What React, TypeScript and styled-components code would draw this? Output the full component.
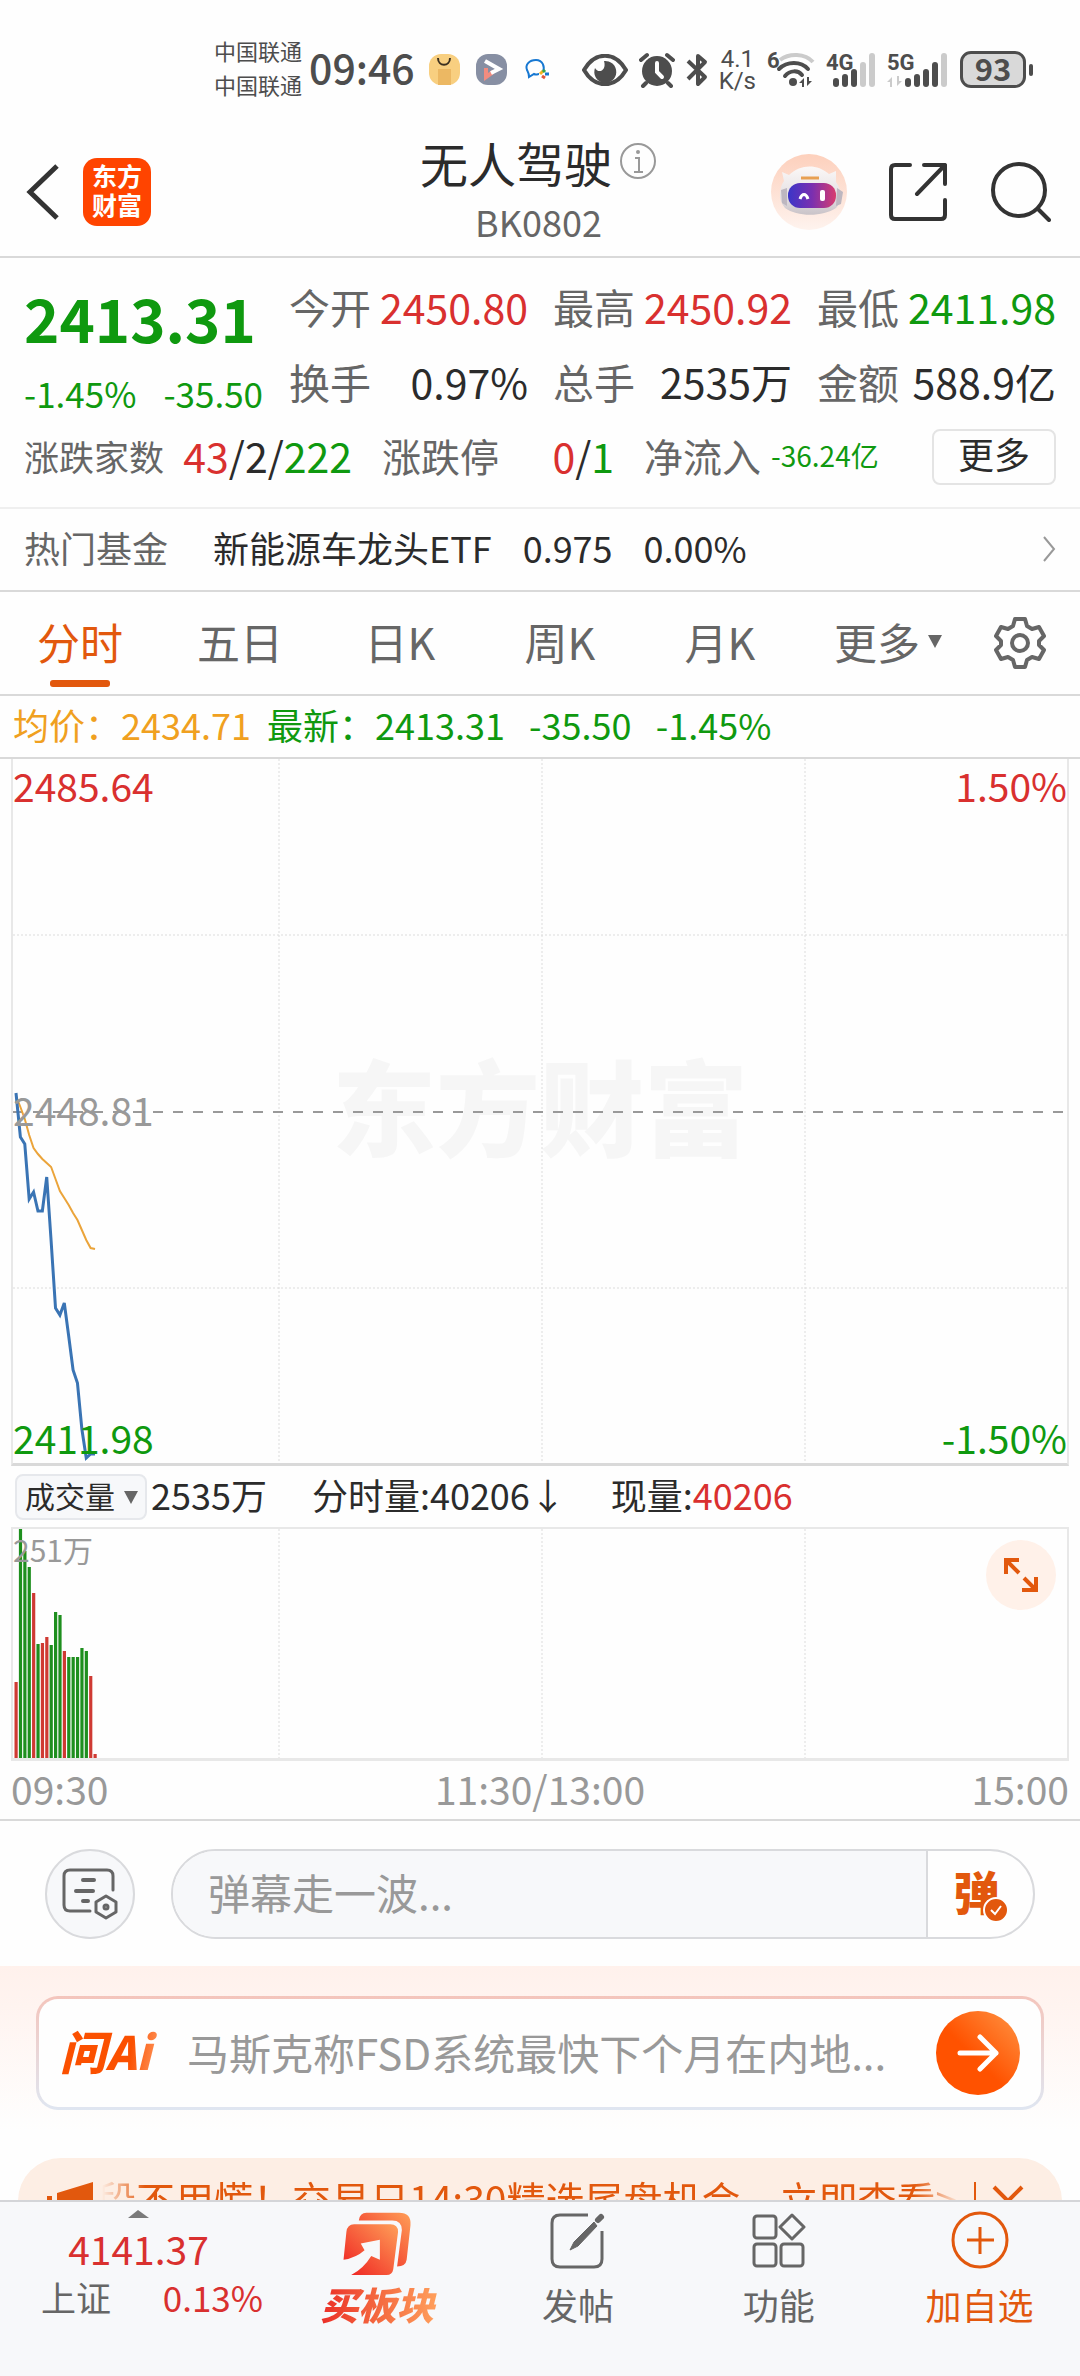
import React from "react";
import styled, { createGlobalStyle, css } from "styled-components";

const color = {
  red: "#d9302f",
  green: "#0f990f",
  orange: "#e2580d",
  amber: "#f0a020",
  ink: "#2b2b2b",
  mid: "#666666",
  soft: "#999999",
  line: "#d9d9d9",
  faint: "#e8e8e8",
  panel: "#f7f8fa",
  status: "#4d4d4d",
};

const GlobalStyle = createGlobalStyle`
  * { box-sizing: border-box; }
  body {
    margin: 0;
    background: #fefefe;
    color: ${color.ink};
    font-family: "Noto Sans CJK SC", "Noto Sans", sans-serif;
  }
  button, input, select {
    font: inherit;
    color: inherit;
    border: 0;
    padding: 0;
    margin: 0;
    background: none;
  }
  a { color: inherit; text-decoration: none; }
  svg { display: block; flex: none; }
`;

type Tone = "red" | "green" | "ink" | "mid" | "soft" | "amber" | "orange";

const Screen = styled.div`
  height: 100vh;
  display: flex;
  flex-direction: column;
`;

const Scroller = styled.main`
  flex: 1;
  min-height: 0;
  overflow-y: auto;
  scrollbar-width: none;
`;

const Text = styled.span<{ $size?: number; $tone?: Tone; $weight?: number }>`
  font-size: ${(p) => p.$size ?? 36}px;
  line-height: 1;
  white-space: pre;
  font-weight: ${(p) => p.$weight ?? 400};
  color: ${(p) => color[p.$tone ?? "ink"]};
`;

const IconButton = styled.button`
  display: flex;
  align-items: center;
  justify-content: center;
  cursor: pointer;
`;

/* Status bar */

const StatusBar = styled.div`
  height: 128px;
  padding: 11px 47px 0 214px;
  display: flex;
  align-items: center;
  gap: 14px;
  color: ${color.status};
  flex: none;
`;

const StatusGroup = styled.div<{ $gap: number; $end?: boolean }>`
  display: flex;
  align-items: center;
  gap: ${(p) => p.$gap}px;
  margin-left: ${(p) => (p.$end ? "auto" : 0)};
`;

const NetworkTime = styled.div`
  display: flex;
  align-items: center;
  gap: 7px;
  padding-bottom: 6px;
`;

const Carriers = styled.div`
  font-size: 22px;
  line-height: 34px;
`;

const Clock = styled.time`
  font-size: 41px;
  line-height: 1;
  font-weight: 500;
`;

const Speed = styled.div`
  font-family: Roboto, sans-serif;
  font-size: 24px;
  line-height: 22px;
  text-align: center;
`;

const SignalText = styled.text`
  font-family: Roboto, sans-serif;
  font-weight: 700;
  font-size: 22px;
  fill: ${color.status};
`;

const Battery = styled.div`
  display: flex;
  align-items: center;
  gap: 3px;

  &::after {
    content: "";
    width: 4px;
    height: 12px;
    border-radius: 2px;
    background: ${color.status};
  }
`;

const BatteryBody = styled.span`
  width: 66px;
  height: 37px;
  padding-bottom: 4px;
  border: 3px solid ${color.status};
  border-radius: 11px;
  background: #d9d9d9;
  display: flex;
  align-items: center;
  justify-content: center;
  font-size: 31px;
  line-height: 1;
  font-weight: 700;
`;

/* Header */

const Header = styled.header`
  height: 130px;
  flex: none;
  padding: 0 29px 0 26px;
  display: grid;
  grid-template-columns: 1fr auto 1fr;
  align-items: center;
  border-bottom: 2px solid ${color.line};
`;

const HeaderSide = styled.div<{ $end?: boolean }>`
  display: flex;
  align-items: center;
  gap: ${(p) => (p.$end ? 42 : 23)}px;
  justify-content: ${(p) => (p.$end ? "flex-end" : "flex-start")};
`;

const Brand = styled.a`
  width: 68px;
  height: 68px;
  padding-bottom: 4px;
  border-radius: 14px;
  background: #ff4400;
  color: #fff;
  display: flex;
  align-items: center;
  justify-content: center;
  text-align: center;
  font-size: 25px;
  line-height: 29px;
  font-weight: 700;
`;

const TitleBlock = styled.div`
  display: flex;
  flex-direction: column;
  align-items: center;
  gap: 17px;
  padding-bottom: 8px;
`;

const TitleLine = styled.h1`
  margin: 0;
  display: flex;
  align-items: center;
  gap: 8px;
  font-size: 48px;
  line-height: 1;
  font-weight: 400;
`;

/* Quote */

const Quote = styled.section`
  padding: 11px 24px 22px;
  border-bottom: 2px solid #efefef;
`;

const QuoteTop = styled.div`
  display: grid;
  grid-template-columns: 239px 1fr;
  column-gap: 26px;
`;

const PriceBlock = styled.div`
  display: flex;
  flex-direction: column;
  gap: 28px;
  padding-top: 18px;
`;

const PriceLine = styled.div`
  display: flex;
  justify-content: space-between;
`;

const Stats = styled.dl`
  margin: 0;
  display: grid;
  grid-template-columns: repeat(3, 1fr);
  column-gap: 25px;
`;

const Stat = styled.div`
  height: 75px;
  display: flex;
  align-items: center;
  justify-content: space-between;
  dd { margin: 0; display: flex; }
  dt, dd { line-height: 1; }
`;

const Breadth = styled.dl`
  margin: 0;
  display: grid;
  grid-template-columns: 328px 232px 1fr auto;
  column-gap: 30px;
  align-items: center;
  padding-top: 10px;
`;

const BreadthItem = styled.div<{ $wide?: boolean; $gap?: number }>`
  display: flex;
  align-items: center;
  gap: ${(p) => p.$gap ?? 0}px;
  padding-bottom: 4px;
  justify-content: ${(p) => (p.$wide ? "space-between" : "flex-start")};
  dd { margin: 0; display: flex; }
  dt, dd { line-height: 1; }
`;

const MoreButton = styled.button`
  width: 124px;
  height: 56px;
  padding-bottom: 8px;
  border: 2px solid #e4e4e4;
  border-radius: 8px;
  font-size: 36px;
  line-height: 1;
`;

const FundRow = styled.a`
  height: 83px;
  padding: 0 24px 6px;
  display: flex;
  align-items: center;
  border-bottom: 2px solid ${color.line};
  gap: 31px;
`;

const FundName = styled.span`
  margin-left: 14px;
  font-size: 36px;
  line-height: 1;
`;

const Push = styled.span`
  margin-left: auto;
  padding-top: 4px;
`;

/* Period tabs */

const Tabs = styled.nav`
  height: 104px;
  display: grid;
  grid-template-columns: repeat(6, 8fr) 6fr;
  border-bottom: 2px solid ${color.line};
`;

const Tab = styled.button<{ $active?: boolean; $menu?: boolean }>`
  display: flex;
  align-items: center;
  justify-content: center;
  gap: 8px;
  position: relative;
  font-size: 43px;
  line-height: 1;
  padding: 0 0 4px ${(p) => (p.$menu ? 16 : 0)}px;
  color: ${(p) => (p.$active ? color.orange : color.mid)};

  ${(p) =>
    p.$active &&
    css`
      &::after {
        content: "";
        position: absolute;
        left: 50%;
        bottom: 7px;
        width: 60px;
        height: 7px;
        margin-left: -30px;
        border-radius: 3px;
        background: ${color.orange};
      }
    `}
`;

const AverageLine = styled.div`
  height: 63px;
  padding: 0 13px 6px;
  display: flex;
  align-items: center;
  border-bottom: 2px solid ${color.line};
`;

/* Charts */

const Plot = styled.div<{ $height: number; $bottom: string }>`
  position: relative;
  height: ${(p) => p.$height}px;
  margin: 0 11px;
  border: 2px solid ${color.faint};
  border-top-width: 0;
  border-bottom: 3px solid ${(p) => p.$bottom};
`;

const PlotSvg = styled.svg`
  position: absolute;
  inset: 0;
  width: 100%;
  height: 100%;
`;

const PlotLabel = styled.span<{ $v: "top" | "middle" | "bottom"; $right?: boolean; $tone: Tone; $small?: boolean }>`
  position: absolute;
  ${(p) => (p.$right ? "right: 0;" : "left: 0;")}
  ${(p) => p.$v === "top" && `top: ${p.$small ? 0 : 6}px;`}
  ${(p) => p.$v === "middle" && "top: 50%; margin-top: -22px;"}
  ${(p) => p.$v === "bottom" && "bottom: 6px;"}
  font-size: ${(p) => (p.$small ? 30 : 39)}px;
  line-height: 40px;
  color: ${(p) => color[p.$tone]};
`;

const Watermark = styled.span`
  position: absolute;
  inset: 0;
  padding-bottom: 14px;
  display: flex;
  align-items: center;
  justify-content: center;
  font-size: 104px;
  line-height: 1;
  font-weight: 900;
  color: #f6f6f6;
`;

const VolumeBar = styled.div`
  height: 63px;
  margin: 0 11px;
  display: flex;
  align-items: center;
  padding-left: 4px;
  border-bottom: 2px solid ${color.faint};
`;

const SelectWrap = styled.label`
  position: relative;
  display: flex;
  margin-right: 4px;

  select {
    appearance: none;
    width: 132px;
    height: 46px;
    padding: 0 0 4px 8px;
    border: 2px solid #e6e8ec;
    border-radius: 8px;
    background: ${color.panel};
    font-size: 30px;
    line-height: 38px;
  }

  svg {
    position: absolute;
    right: 9px;
    top: 17px;
    pointer-events: none;
  }
`;

const VolumeItem = styled.span`
  display: flex;
  align-items: center;
  margin-right: 45px;
  padding-bottom: 5px;
`;

const ExpandButton = styled(IconButton)`
  position: absolute;
  right: 11px;
  top: 11px;
  width: 70px;
  height: 70px;
  border-radius: 50%;
  background: #fff1e9;
`;

const TimeAxis = styled.div`
  height: 60px;
  padding: 0 11px 4px;
  display: grid;
  grid-template-columns: 1fr auto 1fr;
  align-items: center;
  font-size: 39px;
  line-height: 1;
  color: ${color.soft};
  border-bottom: 2px solid ${color.line};

  span:last-child { text-align: right; }
`;

/* Comment bar */

const CommentBar = styled.form`
  padding: 28px 45px 27px;
  display: flex;
  gap: 36px;
`;

const RoundButton = styled(IconButton)`
  width: 90px;
  height: 90px;
  flex: none;
  border: 2px solid #d9dadd;
  border-radius: 50%;
  background: ${color.panel};
`;

const CommentField = styled.div`
  flex: 1;
  height: 90px;
  display: flex;
  overflow: hidden;
  border: 2px solid #d9dadd;
  border-radius: 45px;

  input {
    flex: 1;
    min-width: 0;
    padding: 0 35px 6px;
    background: ${color.panel};
    font-size: 42px;
    border-right: 2px solid #d9dadd;
  }
  input::placeholder { color: ${color.soft}; opacity: 1; }
`;

const BulletButton = styled(IconButton)`
  position: relative;
  width: 105px;
  padding: 0 8px 8px 0;
  font-size: 46px;
  line-height: 1;
  font-weight: 900;
  color: ${color.orange};

  svg {
    position: absolute;
    right: 24px;
    bottom: 14px;
  }
`;

/* AI prompt */

const AiSection = styled.section`
  padding: 30px 36px 48px;
  background: linear-gradient(180deg, #fff1ec 0, #fff4f0 40px, #fefefe 165px);
`;

const AiCard = styled.div`
  height: 114px;
  padding: 0 21px;
  display: flex;
  align-items: center;
  border: 3px solid transparent;
  border-radius: 22px;
  background: linear-gradient(#fefefe, #fefefe) padding-box,
    linear-gradient(180deg, #f4c5bc, #dfe6f1) border-box;
`;

const AiLogo = styled.span`
  width: 127px;
  padding-bottom: 6px;
  font-size: 46px;
  line-height: 54px;
  font-weight: 900;
  font-style: italic;
  color: transparent;
  background: linear-gradient(100deg, #fb5000 55%, #ff9a62 78%);
  background-clip: text;
`;

const AiQuestion = styled.a`
  flex: 1;
  min-width: 0;
  padding-bottom: 3px;
  font-size: 42px;
  line-height: 60px;
  color: ${color.soft};
  white-space: nowrap;
`;

const AiSend = styled(IconButton)`
  width: 84px;
  height: 84px;
  border-radius: 50%;
  background: linear-gradient(45deg, #ff5200 45%, #ff9545);
`;

/* Promo strip */

const Promo = styled.aside`
  margin: 0 18px;
  height: 86px;
  padding: 0 38px 0 29px;
  display: flex;
  align-items: center;
  border-radius: 43px;
  background: #fdeee4;
  color: ${color.orange};
`;

const PromoText = styled.a`
  flex: 1;
  min-width: 0;
  margin-left: 4px;
  padding-bottom: 6px;
  overflow: hidden;
  white-space: nowrap;
  font-size: 39px;
  line-height: 58px;
  mask-image: linear-gradient(90deg, transparent 5px, #000 48px, #000 calc(100% - 60px), transparent calc(100% - 12px));
`;

const PromoDivider = styled.i`
  width: 2px;
  height: 38px;
  margin-right: 16px;
  background: ${color.orange};
`;

/* Bottom bar */

const BottomBar = styled.footer`
  flex: none;
  height: 176px;
  display: flex;
  border-top: 2px solid #d4d5d8;
  background: ${color.panel};
`;

const IndexTicker = styled.button`
  width: 277px;
  padding-top: 8px;
  display: flex;
  flex-direction: column;
  align-items: center;

  svg { margin-bottom: 6px; }
`;

const IndexLine = styled.span<{ $split?: boolean }>`
  display: flex;
  align-items: center;
  height: 48px;
  width: ${(p) => (p.$split ? "100%" : "auto")};
  padding: ${(p) => (p.$split ? "0 14px 0 41px" : 0)};
  justify-content: space-between;
`;

const Action = styled.button<{ $tone?: Tone }>`
  flex: 1;
  padding-top: 8px;
  display: flex;
  flex-direction: column;
  align-items: center;
  justify-content: flex-start;
  gap: 4px;
  font-size: 36px;
  line-height: 48px;
  color: ${(p) => color[p.$tone ?? "mid"]};

  svg { height: 66px; }
`;

const BuyLabel = styled.span`
  padding: 0 4px;
  font-size: 38px;
  font-weight: 900;
  font-style: italic;
  color: transparent;
  background: linear-gradient(90deg, #ea2a26, #f4683f 50%, #ffa05c);
  background-clip: text;
`;

const Caret = () => (
  <svg width="14" height="13" viewBox="0 0 14 13" aria-hidden>
    <path d="M0 0H14L7 13Z" fill={color.mid} />
  </svg>
);

const BAR_HEIGHTS = [9, 13, 18, 25, 34];

const SignalBars = ({ label, on, data }: { label: string; on: number; data?: boolean }) => {
  const start = data ? 18 : 7;
  const width = data ? 62 : 50;
  return (
    <svg width={width} height="38" viewBox={`0 0 ${width} 38`} aria-hidden>
      <SignalText x="0" y="19">{label}</SignalText>
      {BAR_HEIGHTS.map((h, i) => (
        <rect
          key={h}
          x={start + i * 9}
          y={36 - h}
          width="6"
          height={h}
          rx="3"
          fill={i < on ? color.status : "#cbcbcb"}
        />
      ))}
      {data && <path d="M5 36V26L0 31H3V36ZM10 25V35L15 30H12V25Z" fill="#cbcbcb" />}
    </svg>
  );
};

const STEP = 439 / 100;
const PRICE = [334, 378, 385, 440, 433, 452, 452, 418, 482, 549, 556, 544, 577, 611, 624, 670, 699, 695, 695];
const AVERAGE = [337, 348, 360, 376, 389, 395, 400, 404, 408, 420, 432, 439, 446, 454, 461, 471, 481, 489, 490];
const VOLUME: [number, "r" | "g"][] = [
  [76, "r"], [231, "g"], [207, "g"], [191, "g"], [165, "r"], [114, "g"], [115, "r"], [121, "r"], [113, "g"],
  [146, "g"], [143, "g"], [107, "r"], [101, "g"], [101, "g"], [101, "g"], [110, "g"], [107, "g"], [82, "r"], [4, "r"],
];

const toPoints = (values: number[]) => values.map((y, i) => `${3 + i * STEP},${y}`).join(" ");

const GRID_X = [266, 529, 792];

const GridColumns = ({ height }: { height: number }) => (
  <>
    {GRID_X.map((x) => (
      <line key={x} x1={x} x2={x} y1="0" y2={height} stroke="#dcdcdc" strokeWidth="1" strokeDasharray="2 2" />
    ))}
  </>
);

const PriceChart = () => (
  <Plot $height={707} $bottom={color.line}>
    <Watermark>东方财富</Watermark>
    <PlotSvg viewBox="0 0 1054 704" preserveAspectRatio="none" role="img" aria-label="分时走势">
      <GridColumns height={704} />
      {[176, 529].map((y) => (
        <line key={y} x1="0" x2="1054" y1={y} y2={y} stroke="#dcdcdc" strokeWidth="1" strokeDasharray="2 2" />
      ))}
      <line x1="0" x2="1054" y1="353" y2="353" stroke="#999" strokeWidth="2" strokeDasharray="10 10" />
      <polyline points={toPoints(AVERAGE)} fill="none" stroke="#eba43a" strokeWidth="2" />
      <polyline points={toPoints(PRICE)} fill="none" stroke="#3a74b4" strokeWidth="3" />
    </PlotSvg>
    <PlotLabel $v="top" $tone="red">2485.64</PlotLabel>
    <PlotLabel $v="top" $tone="red" $right>1.50%</PlotLabel>
    <PlotLabel $v="middle" $tone="soft">2448.81</PlotLabel>
    <PlotLabel $v="bottom" $tone="green">2411.98</PlotLabel>
    <PlotLabel $v="bottom" $tone="green" $right>-1.50%</PlotLabel>
  </Plot>
);

const VolumeChart = () => (
  <Plot $height={232} $bottom={color.faint}>
    <PlotSvg viewBox="0 0 1054 229" preserveAspectRatio="none" role="img" aria-label="成交量">
      <GridColumns height={229} />
      {VOLUME.map(([h, c], i) => (
        <rect key={i} x={1.5 + i * STEP} y={229 - h} width="3.2" height={h} fill={c === "r" ? "#cf3a33" : "#1e8f1e"} />
      ))}
    </PlotSvg>
    <PlotLabel $v="top" $tone="soft" $small>251万</PlotLabel>
    <ExpandButton aria-label="放大">
      <svg width="34" height="36" viewBox="0 0 34 36" fill="none" stroke={color.orange} strokeWidth="4">
        <path d="M2 17V3H15M3 4L15 16M32 20V33H18M31 32L20 21" />
      </svg>
    </ExpandButton>
  </Plot>
);

const TABS = ["分时", "五日", "日K", "周K", "月K"];

const STATS: { name: string; value: string; tone: Tone }[] = [
  { name: "今开", value: "2450.80", tone: "red" },
  { name: "最高", value: "2450.92", tone: "red" },
  { name: "最低", value: "2411.98", tone: "green" },
  { name: "换手", value: "0.97%", tone: "ink" },
  { name: "总手", value: "2535万", tone: "ink" },
  { name: "金额", value: "588.9亿", tone: "ink" },
];

export default function App() {
  return (
    <Screen>
      <GlobalStyle />
      <StatusBar>
        <NetworkTime>
          <Carriers>
            <div>中国联通</div>
            <div>中国联通</div>
          </Carriers>
          <Clock>09:46</Clock>
        </NetworkTime>
        <StatusGroup $gap={16}>
          <svg width="31" height="31" viewBox="0 0 31 31" aria-hidden>
            <rect width="31" height="31" rx="12" fill="#f8cf80" />
            <path d="M9 15H22V31H9Z" fill="#ecb863" />
            <path d="M9 4C9 13 21 13 21 4" fill="none" stroke="#3c3020" strokeWidth="2" />
          </svg>
          <svg width="31" height="31" viewBox="0 0 31 31" aria-hidden>
            <rect width="31" height="31" rx="12" fill="#878fa3" />
            <path d="M10 14V23L17 18" fill="none" stroke="#f28c80" strokeWidth="4" />
            <path d="M9 7L23 15L15 19" fill="none" stroke="#fff" strokeWidth="4" />
          </svg>
          <svg width="31" height="31" viewBox="0 0 31 31" aria-hidden>
            <path d="M20 18C22 13 20 6 13 6C6 6 2 11 4 16C5 18 6 19 6 23L11 20C13 21 15 20 16 20" fill="none" stroke="#1778d2" strokeWidth="2" />
            <path d="M17 20L20 17" stroke="#f3b421" strokeWidth="3" />
            <path d="M20 16L22 18" stroke="#38a447" strokeWidth="3" />
            <path d="M22 20L26 20" stroke="#1778d2" strokeWidth="3" />
            <path d="M19 22L22 24" stroke="#e2553c" strokeWidth="3" />
          </svg>
        </StatusGroup>
        <StatusGroup $gap={11} $end>
          <svg width="46" height="32" viewBox="0 0 46 32" aria-hidden>
            <path d="M2 16C13 -3 33 -3 44 16C33 35 13 35 2 16Z" fill="none" stroke={color.status} strokeWidth="4" />
            <path d="M22 7A11 11 0 1 1 13 14C16 20 25 17 22 7Z" fill={color.status} />
          </svg>
          <svg width="36" height="36" viewBox="0 0 36 36" aria-hidden>
            <circle cx="18" cy="19" r="15" fill={color.status} />
            <path d="M2 8L8 3M34 8L28 3M7 31L4 34M29 31L32 34" stroke={color.status} strokeWidth="4" strokeLinecap="round" />
            <path d="M18 11V20L23 25" fill="none" stroke="#fefefe" strokeWidth="4" strokeLinecap="round" />
          </svg>
          <svg width="22" height="36" viewBox="0 0 22 36" aria-hidden>
            <path d="M2 9L19 25L12 32V4L19 10L2 27" fill="none" stroke={color.status} strokeWidth="4" strokeLinejoin="round" />
          </svg>
          <Speed>
            4.1
            <br />
            K/s
          </Speed>
          <svg width="48" height="38" viewBox="0 0 48 38" aria-hidden>
            <SignalText x="0" y="17">6</SignalText>
            <path d="M13 9C22 2 38 2 46 11" fill="none" stroke="#cbcbcb" strokeWidth="4" />
            <path d="M12 18C20 10 34 10 41 18M18 25C23 19 31 19 35 24" fill="none" stroke={color.status} strokeWidth="4" strokeLinecap="round" />
            <circle cx="26" cy="31" r="4" fill={color.status} />
            <path d="M37 36V27L32 32H35V36ZM40 26V35L45 30H42V26Z" fill={color.status} />
          </svg>
          <SignalBars label="4G" on={3} />
          <SignalBars label="5G" on={4} data />
          <Battery>
            <BatteryBody>93</BatteryBody>
          </Battery>
        </StatusGroup>
      </StatusBar>

      <Header>
        <HeaderSide>
          <IconButton aria-label="返回">
            <svg width="34" height="56" viewBox="0 0 34 56" fill="none" stroke="#333" strokeWidth="5">
              <path d="M31 2L4 28L31 54" />
            </svg>
          </IconButton>
          <Brand href="#">
            东方
            <br />
            财富
          </Brand>
        </HeaderSide>
        <TitleBlock>
          <TitleLine>
            无人驾驶
            <svg width="37" height="37" viewBox="0 0 37 37" fill="none" stroke={color.soft} strokeWidth="2" aria-hidden>
              <circle cx="18" cy="18" r="17" />
              <path d="M15 15H19V29M14 29H23" />
              <circle cx="18" cy="9" r="1" fill={color.soft} />
            </svg>
          </TitleLine>
          <Text $tone="mid">BK0802</Text>
        </TitleBlock>
        <HeaderSide $end>
          <IconButton aria-label="智能助手">
            <svg width="76" height="76" viewBox="0 0 76 76">
              <defs>
                <linearGradient id="halo" x1="0" y1="0" x2="0" y2="1">
                  <stop offset="0" stopColor="#fdd0bc" />
                  <stop offset="1" stopColor="#fef3ee" />
                </linearGradient>
                <linearGradient id="helmet" x1="0" y1="0" x2="0" y2="1">
                  <stop offset="0" stopColor="#fbf8f7" />
                  <stop offset="0.6" stopColor="#e6e1e3" />
                  <stop offset="1" stopColor="#c9c3c8" />
                </linearGradient>
                <linearGradient id="visor" x1="0" y1="0" x2="1" y2="0">
                  <stop offset="0" stopColor="#3b35c8" />
                  <stop offset="0.5" stopColor="#7a2fb0" />
                  <stop offset="1" stopColor="#d83c6e" />
                </linearGradient>
              </defs>
              <circle cx="38" cy="38" r="38" fill="url(#halo)" />
              <path d="M11 18L18 21C30 10 46 10 58 20L65 17L65 28C71 36 71 48 65 54C52 63 26 63 14 54C7 46 8 34 13 27Z" fill="url(#helmet)" />
              <path d="M10 36L16 34V52L11 49ZM66 34L72 38L70 50L65 52Z" fill="#bdb7c0" />
              <rect x="17" y="29" width="48" height="25" rx="12" fill="url(#visor)" />
              <path d="M29 45C31 39 35 39 37 45" fill="none" stroke="#fff" strokeWidth="3" />
              <rect x="49" y="36" width="5" height="11" rx="2" fill="#fff" />
              <path d="M30 24H48" stroke="#e8a052" strokeWidth="3" />
            </svg>
          </IconButton>
          <IconButton aria-label="分享">
            <svg width="58" height="58" viewBox="0 0 58 58" fill="none" stroke="#333" strokeWidth="4" strokeLinecap="round" strokeLinejoin="round">
              <path d="M21 2H6Q2 2 2 6V52Q2 56 6 56H52Q56 56 56 52V37M35 2H56V21M56 2L28 31" />
            </svg>
          </IconButton>
          <IconButton aria-label="搜索">
            <svg width="62" height="60" viewBox="0 0 62 60" fill="none" stroke="#333" strokeWidth="4" strokeLinecap="round">
              <circle cx="30" cy="28" r="26" />
              <path d="M49 47L60 58" />
            </svg>
          </IconButton>
        </HeaderSide>
      </Header>

      <Scroller>
        <Quote>
          <QuoteTop>
            <PriceBlock>
              <Text $size={60} $tone="green" $weight={700}>2413.31</Text>
              <PriceLine>
                <Text $size={35} $tone="green">-1.45%</Text>
                <Text $size={35} $tone="green">-35.50</Text>
              </PriceLine>
            </PriceBlock>
            <Stats>
              {STATS.map((s) => (
                <Stat key={s.name}>
                  <dt><Text $size={41} $tone="mid">{s.name}</Text></dt>
                  <dd><Text $size={41} $tone={s.tone}>{s.value}</Text></dd>
                </Stat>
              ))}
            </Stats>
          </QuoteTop>
          <Breadth>
            <BreadthItem $wide>
              <dt><Text $size={35} $tone="mid">涨跌家数</Text></dt>
              <dd>
                <Text $size={41} $tone="red">43</Text>
                <Text $size={41}>/2/</Text>
                <Text $size={41} $tone="green">222</Text>
              </dd>
            </BreadthItem>
            <BreadthItem $wide>
              <dt><Text $size={39} $tone="mid">涨跌停</Text></dt>
              <dd>
                <Text $size={41} $tone="red">0</Text>
                <Text $size={41}>/</Text>
                <Text $size={41} $tone="green">1</Text>
              </dd>
            </BreadthItem>
            <BreadthItem $gap={10}>
              <dt><Text $size={39} $tone="mid">净流入</Text></dt>
              <dd><Text $size={28} $tone="green">-36.24亿</Text></dd>
            </BreadthItem>
            <MoreButton>更多</MoreButton>
          </Breadth>
        </Quote>

        <FundRow href="#">
          <Text $tone="mid">热门基金</Text>
          <FundName>新能源车龙头ETF</FundName>
          <Text>0.975</Text>
          <Text>0.00%</Text>
          <Push>
            <svg width="13" height="26" viewBox="0 0 13 26" fill="none" stroke={color.soft} strokeWidth="2" aria-hidden>
              <path d="M1 1L11 13L1 25" />
            </svg>
          </Push>
        </FundRow>

        <Tabs>
          {TABS.map((t, i) => (
            <Tab key={t} $active={i === 0}>{t}</Tab>
          ))}
          <Tab $menu>
            更多
            <Caret />
          </Tab>
          <IconButton aria-label="设置">
            <svg width="52" height="52" viewBox="0 0 52 52" fill="none" stroke={color.mid} strokeWidth="4" strokeLinejoin="round">
              <path d="M21 2H31L33 9L38 12L45 10L50 19L45 24V28L50 33L45 42L38 40L33 43L31 50H21L19 43L14 40L7 42L2 33L7 28V24L2 19L7 10L14 12L19 9Z" />
              <circle cx="26" cy="26" r="8" />
            </svg>
          </IconButton>
        </Tabs>

        <AverageLine>
          <Text $tone="amber">均价：2434.71</Text>
          <Text $tone="green">{"  最新：2413.31   -35.50   -1.45%"}</Text>
        </AverageLine>

        <PriceChart />

        <VolumeBar>
          <SelectWrap>
            <select aria-label="副图指标" defaultValue="成交量">
              <option>成交量</option>
            </select>
            <Caret />
          </SelectWrap>
          <VolumeItem><Text>2535万</Text></VolumeItem>
          <VolumeItem><Text>分时量:40206↓</Text></VolumeItem>
          <VolumeItem>
            <Text>现量:</Text>
            <Text $tone="red">40206</Text>
          </VolumeItem>
        </VolumeBar>
        <VolumeChart />
        <TimeAxis>
          <span>09:30</span>
          <span>11:30/13:00</span>
          <span>15:00</span>
        </TimeAxis>

        <CommentBar onSubmit={(e) => e.preventDefault()}>
          <RoundButton type="button" aria-label="弹幕设置">
            <svg width="56" height="52" viewBox="0 0 56 52" fill="none" stroke={color.mid} strokeWidth="3" strokeLinecap="round">
              <path d="M51 22V8Q51 2 45 2H8Q2 2 2 8V37Q2 43 8 43H28" />
              <path d="M21 12H32M14 23H31M21 33H26" strokeWidth="4" />
              <path d="M44 28L54 34V44L44 50L34 44V34Z" strokeLinejoin="round" />
              <circle cx="44" cy="39" r="2" />
            </svg>
          </RoundButton>
          <CommentField>
            <input type="text" aria-label="弹幕" placeholder="弹幕走一波..." />
            <BulletButton type="button" aria-label="弹幕开关">
              弹
              <svg width="26" height="26" viewBox="0 0 26 26">
                <circle cx="13" cy="13" r="12" fill={color.orange} stroke="#fefefe" strokeWidth="2" />
                <path d="M8 13L12 17L18 9" fill="none" stroke="#fff" strokeWidth="2" />
              </svg>
            </BulletButton>
          </CommentField>
        </CommentBar>

        <AiSection>
          <AiCard>
            <AiLogo>问Ai</AiLogo>
            <AiQuestion href="#">马斯克称FSD系统最快下个月在内地...</AiQuestion>
            <AiSend aria-label="提问">
              <svg width="42" height="38" viewBox="0 0 42 38" fill="none" stroke="#fff" strokeWidth="5" strokeLinecap="round" strokeLinejoin="round">
                <path d="M3 19H39M23 3L39 19L23 35" />
              </svg>
            </AiSend>
          </AiCard>
        </AiSection>

        <Promo>
          <svg width="46" height="38" viewBox="0 0 46 38" fill={color.orange} aria-hidden>
            <path d="M0 14H5V26H0ZM10 11L46 0V38L10 27Z" />
          </svg>
          <PromoText href="#">段不用慌！交易日14:30精选尾盘机会，立即查看&gt;</PromoText>
          <PromoDivider />
          <IconButton aria-label="关闭">
            <svg width="32" height="32" viewBox="0 0 32 32" fill="none" stroke={color.orange} strokeWidth="4">
              <path d="M2 2L30 30M30 2L2 30" />
            </svg>
          </IconButton>
        </Promo>
      </Scroller>

      <BottomBar>
        <IndexTicker>
          <svg width="21" height="8" viewBox="0 0 21 8" aria-hidden>
            <path d="M10 0L21 8H0Z" fill="#7a7a7a" />
          </svg>
          <IndexLine><Text $size={39} $tone="red">4141.37</Text></IndexLine>
          <IndexLine $split>
            <Text $size={35} $tone="mid">上证</Text>
            <Text $size={35} $tone="red">0.13%</Text>
          </IndexLine>
        </IndexTicker>
        <Action>
          <svg width="72" viewBox="0 -3 72 69" aria-hidden>
            <defs>
              <linearGradient id="buy" x1="0" y1="1" x2="1" y2="0">
                <stop offset="0" stopColor="#ee1f20" />
                <stop offset="1" stopColor="#ff9f58" />
              </linearGradient>
            </defs>
            <path d="M17 8Q18 0 25 0H59Q72 0 71 13L67 49Q66 56 57 56L62 18Q62 8 52 8Z" fill="url(#buy)" />
            <path d="M12 12H50Q58 12 58 20L53 59Q52 65 46 65H9Q22 58 30 45L39 49V28L19 32L23 39Q14 47 1 49L4 20Q5 12 12 12Z" fill="url(#buy)" />
          </svg>
          <BuyLabel>买板块</BuyLabel>
        </Action>
        <Action>
          <svg width="56" viewBox="0 -3 56 66" fill="none" stroke={color.mid} strokeWidth="3" aria-hidden>
            <path d="M38 2H10Q2 2 2 10V46Q2 54 10 54H44Q52 54 52 46V18" />
            <path d="M20 37L24 29L44 9L47 13L28 33Z" fill={color.mid} strokeWidth="1" />
            <path d="M48 7L51 4" strokeWidth="6" strokeLinecap="round" />
          </svg>
          发帖
        </Action>
        <Action>
          <svg width="54" viewBox="0 -4 54 66" fill="none" stroke={color.mid} strokeWidth="3" strokeLinejoin="round" aria-hidden>
            <rect x="2" y="2" width="22" height="22" rx="3" />
            <rect x="2" y="30" width="22" height="22" rx="3" />
            <rect x="29" y="30" width="22" height="22" rx="3" />
            <path d="M40 1L52 13L40 25L28 13Z" />
          </svg>
          功能
        </Action>
        <Action $tone="orange">
          <svg width="58" viewBox="-1 -2 58 66" fill="none" stroke={color.orange} strokeWidth="3" aria-hidden>
            <circle cx="28" cy="28" r="27" />
            <path d="M28 15V42M15 28H42" />
          </svg>
          加自选
        </Action>
      </BottomBar>
    </Screen>
  );
}
